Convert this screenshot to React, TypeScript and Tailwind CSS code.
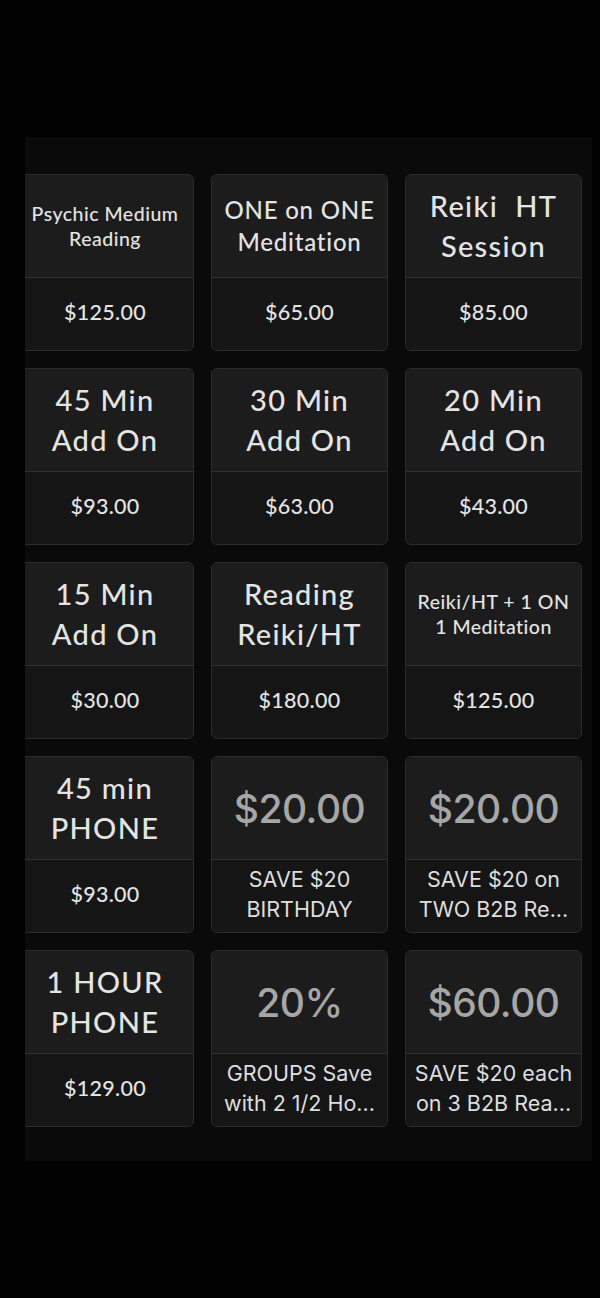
type Item = {
  lines: string[];
  size: "sm" | "md" | "lg";
  bottom: string[];
  discount?: boolean;
};

const items: Item[] = [
  { lines: ["Psychic Medium", "Reading"], size: "sm", bottom: ["$125.00"] },
  { lines: ["ONE on ONE", "Meditation"], size: "md", bottom: ["$65.00"] },
  { lines: ["Reiki  HT", "Session"], size: "lg", bottom: ["$85.00"] },
  { lines: ["45 Min", "Add On"], size: "lg", bottom: ["$93.00"] },
  { lines: ["30 Min", "Add On"], size: "lg", bottom: ["$63.00"] },
  { lines: ["20 Min", "Add On"], size: "lg", bottom: ["$43.00"] },
  { lines: ["15 Min", "Add On"], size: "lg", bottom: ["$30.00"] },
  { lines: ["Reading", "Reiki/HT"], size: "lg", bottom: ["$180.00"] },
  { lines: ["Reiki/HT + 1 ON", "1 Meditation"], size: "sm", bottom: ["$125.00"] },
  { lines: ["45 min", "PHONE"], size: "lg", bottom: ["$93.00"] },
  { lines: ["$20.00"], size: "lg", bottom: ["SAVE $20", "BIRTHDAY"], discount: true },
  { lines: ["$20.00"], size: "lg", bottom: ["SAVE $20 on", "TWO B2B Re..."], discount: true },
  { lines: ["1 HOUR", "PHONE"], size: "lg", bottom: ["$129.00"] },
  { lines: ["20%"], size: "lg", bottom: ["GROUPS Save", "with 2 1/2 Ho..."], discount: true },
  { lines: ["$60.00"], size: "lg", bottom: ["SAVE $20 each", "on 3 B2B Rea..."], discount: true },
];

const sizeClass = {
  sm: "text-[19.5px] leading-[25px] tracking-[0.5px]",
  md: "text-[24px] leading-[32px] tracking-[0.8px]",
  lg: "text-[29px] leading-[40px] tracking-[1.3px]",
};

function Card({ item }: { item: Item }) {
  return (
    <div className="flex h-[177px] flex-col overflow-hidden rounded-[6px] border border-[#2b2b2b] bg-[#151515]">
      <div className="flex h-[103px] shrink-0 items-center justify-center border-b border-[#303030] bg-[#1c1c1c] px-1 text-center">
        {item.discount ? (
          <span className="font-['Inter',sans-serif] text-[39px] font-medium leading-none tracking-[-0.5px] text-[#a6a6a6]">
            {item.lines[0]}
          </span>
        ) : (
          <div className={`font-['Lato',sans-serif] font-medium text-[#e4e4e4] ${sizeClass[item.size]}`}>
            {item.lines.map((l) => (
              <div key={l} className="whitespace-pre">
                {l}
              </div>
            ))}
          </div>
        )}
      </div>
      <div className="flex flex-1 items-center justify-center px-1 pb-[4px] text-center">
        {item.discount ? (
          <div className="font-['Inter',sans-serif] text-[21.5px] leading-[30px] text-[#dedede]">
            {item.bottom.map((l) => (
              <div key={l} className="whitespace-nowrap">
                {l}
              </div>
            ))}
          </div>
        ) : (
          <span className="font-['Lato',sans-serif] text-[21.5px] font-medium tracking-[0.3px] text-[#e4e4e4]">
            {item.bottom[0]}
          </span>
        )}
      </div>
    </div>
  );
}

export default function App() {
  return (
    <div className="min-h-[1298px] w-[600px] bg-black pt-[137px]">
      <div className="ml-[25px] w-[567px] overflow-hidden bg-[#0a0a0a] pb-[34px] pt-[37px]">
        <div className="-ml-[9px] grid grid-cols-[178px_177px_177px] gap-x-[17px] gap-y-[17px]">
          {items.map((item, i) => (
            <Card key={i} item={item} />
          ))}
        </div>
      </div>
    </div>
  );
}
